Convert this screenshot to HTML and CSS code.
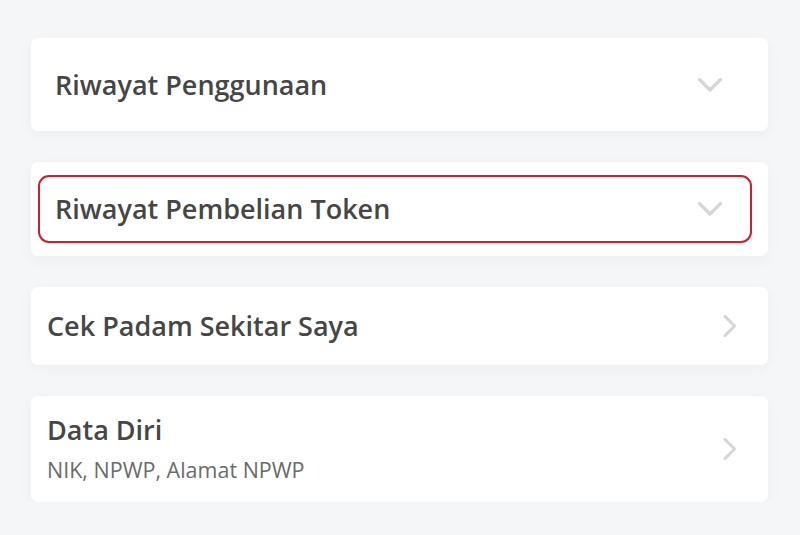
FILE: index.html
```html
<!DOCTYPE html>
<html lang="id">
<head>
    <meta charset="UTF-8">
    <meta name="viewport" content="width=device-width, initial-scale=1.0">
    <title>Menu Akun</title>
    <link rel="stylesheet" href="styles.css">
</head>
<body>
    <main class="menu">
        <!-- Riwayat -->
        <section class="card card-plain">
            <div class="row">
                <span class="title">Riwayat Penggunaan</span>
                <svg class="chev chev-down" viewBox="0 0 24 14"><path d="M1.5 1.5 L12 12 L22.5 1.5"/></svg>
            </div>
        </section>

        <section class="card card-selected">
            <div class="row row-selected">
                <span class="title">Riwayat Pembelian Token</span>
                <svg class="chev chev-down" viewBox="0 0 24 14"><path d="M1.5 1.5 L12 12 L22.5 1.5"/></svg>
            </div>
        </section>

        <!-- Link -->
        <section class="card card-link">
            <span class="title">Cek Padam Sekitar Saya</span>
            <svg class="chev chev-right" viewBox="0 0 14 24"><path d="M1.5 1.5 L12 12 L1.5 22.5"/></svg>
        </section>

        <section class="card card-link card-data">
            <div class="text">
                <span class="title">Data Diri</span>
                <span class="sub">NIK, NPWP, Alamat NPWP</span>
            </div>
            <svg class="chev chev-right" viewBox="0 0 14 24"><path d="M1.5 1.5 L12 12 L1.5 22.5"/></svg>
        </section>
    </main>
</body>
</html>
```

FILE: styles.css
```css
/* 全体 */
body {
    margin: 0;
    font-family: "Open Sans", "Noto Sans", sans-serif;
    background-color: #f5f6f8;
    color: #444;
}

.menu {
    padding: 38px 32px 0 31px;
    display: flex;
    flex-direction: column;
    gap: 31px;
}

/* カード */
.card {
    background-color: #fff;
    border-radius: 7px;
    box-shadow: 0 4px 14px rgba(30, 40, 60, 0.04);
}

.title {
    font-size: 27px;
    font-weight: 600;
    color: #464646;
    line-height: 1.3;
}

.chev {
    fill: none;
    stroke: #d6d6d6;
    stroke-width: 3.2;
    stroke-linecap: round;
    stroke-linejoin: round;
}

.chev-down {
    width: 24px;
    height: 14px;
}

.chev-right {
    width: 14px;
    height: 22px;
}

/* アコーディオン */
.card-plain {
    height: 93px;
    padding: 0 46px 0 24px;
    display: flex;
    align-items: center;
}

.row {
    flex: 1;
    display: flex;
    align-items: center;
    justify-content: space-between;
}

.card-selected {
    padding: 13px 16px 13px 7px;
}

.row-selected {
    height: 64px;
    border: 2.5px solid #cf1f2c;
    border-radius: 11px;
    padding: 0 28px 0 15px;
}

/* リンク */
.card-link {
    height: 78px;
    padding: 0 31px 0 16px;
    display: flex;
    align-items: center;
    justify-content: space-between;
}

.card-data {
    height: 106px;
}

.text {
    display: flex;
    flex-direction: column;
    gap: 8px;
    padding-bottom: 2px;
}

.sub {
    font-size: 21.5px;
    color: #6b6b6b;
}
```
